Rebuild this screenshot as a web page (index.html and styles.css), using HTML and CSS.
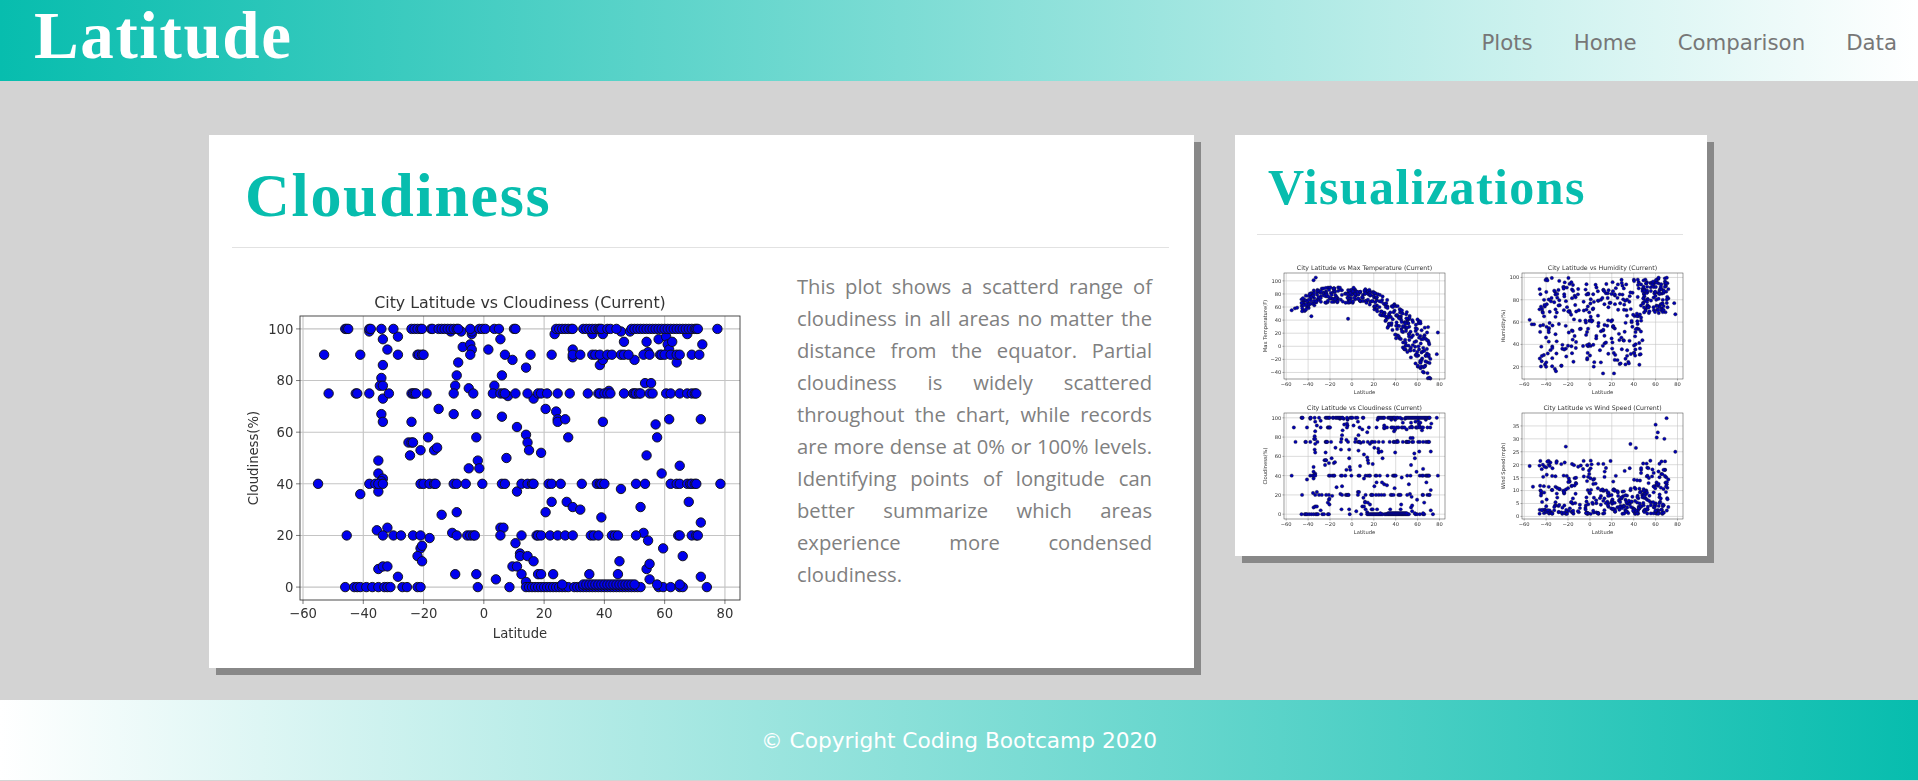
FILE: index.html
```html
<!DOCTYPE html>
<html lang="en">

<head>
    <meta charset="UTF-8">
    <title>Latitude - Cloudiness</title>
    <link rel="stylesheet" href="styles.css">
</head>

<body>
    <header class="topbar">
        <h1 class="brand">Latitude</h1>
        <nav class="topnav">
            <a href="#">Plots</a>
            <a href="#">Home</a>
            <a href="#">Comparison</a>
            <a href="#">Data</a>
        </nav>
    </header>
    <main class="content">
        <section class="card card-main">
            <h2 class="card-title">Cloudiness</h2>
            <hr class="rule">
            <div class="detail">
                <svg class="plot plot-main" id="plot-main" width="510" height="360"></svg>
                <p class="lead">This plot shows a scatterd range of cloudiness in all areas no matter the distance from the equator. Partial cloudiness is widely scattered throughout the chart, while records are more dense at 0% or 100% levels. Identifying points of longitude can better summarize which areas experience more condensed cloudiness.</p>
            </div>
        </section>
        <aside class="card card-side">
            <h2 class="side-title">Visualizations</h2>
            <hr class="rule">
            <div class="thumbs">
                <svg class="plot plot-small" id="plot-temp" width="195" height="134"></svg>
                <svg class="plot plot-small" id="plot-humidity" width="195" height="134"></svg>
                <svg class="plot plot-small" id="plot-cloud" width="195" height="134"></svg>
                <svg class="plot plot-small" id="plot-wind" width="195" height="134"></svg>
            </div>
        </aside>
    </main>
    <footer class="bottombar">© Copyright Coding Bootcamp 2020</footer>
    <script src="chart.js"></script>
</body>

</html>
```

FILE: styles.css
```css
* {
    box-sizing: border-box;
    padding: 0;
    margin: 0;
}

body {
    background: #d3d3d3;
    font-family: "DejaVu Sans", Verdana, sans-serif;
}

a {
    text-decoration: none;
}

.topbar {
    height: 81px;
    display: flex;
    justify-content: space-between;
    align-items: flex-start;
    padding: 0 21px 0 34px;
    background: linear-gradient(to right, #07bdae, #fff);
}

.brand {
    font-family: "Liberation Serif", Georgia, serif;
    font-size: 67px;
    letter-spacing: 1.6px;
    line-height: 70px;
    color: #fff;
}

.topnav {
    display: flex;
    gap: 41px;
    padding-top: 30px;
}

.topnav a {
    color: #777;
    font-size: 21.3px;
    line-height: 26px;
}

.content {
    height: 619px;
    display: flex;
    align-items: flex-start;
    gap: 41px;
    padding: 54px 0 0 209px;
}

.card {
    background: #fff;
    box-shadow: 7px 7px 0 #888;
}

.card-main {
    width: 985px;
    height: 533px;
}

.card-side {
    width: 472px;
    height: 421px;
}

.card-title,
.side-title {
    font-family: "Liberation Serif", Georgia, serif;
    color: #07bdae;
}

.card-title {
    font-size: 62px;
    letter-spacing: 1.7px;
    line-height: 75px;
    padding: 23px 0 14px 36px;
}

.side-title {
    font-size: 50px;
    letter-spacing: 1.4px;
    line-height: 62px;
    padding: 21px 0 16px 33px;
}

.rule {
    border: 0;
    border-top: 1px solid #e2e2e2;
}

.card-main .rule {
    margin: 0 25px 0 23px;
}

.card-side .rule {
    margin: 0 24px 0 22px;
}

.detail {
    display: flex;
    justify-content: space-between;
    padding: 22px 42px 0 26px;
}

.plot-main {
    margin-top: 18px;
}

.plot {
    display: block;
    filter: blur(0.5px);
}

.plot-small {
    filter: blur(0.6px);
}

.plot text {
    font-family: "DejaVu Sans", sans-serif;
    fill: #333;
}

.lead {
    width: 355px;
    font-family: "Open Sans", sans-serif;
    font-size: 20.2px;
    font-weight: 400;
    line-height: 32px;
    color: #808080;
    text-align: justify;
}

.thumbs {
    display: grid;
    grid-template-columns: 195px 195px;
    gap: 6px 43px;
    padding: 27px 0 0 25px;
}

.bottombar {
    height: 80px;
    display: flex;
    align-items: center;
    justify-content: center;
    font-size: 21.7px;
    color: #fff;
    background: linear-gradient(to left, #07bdae, #fff);
}
```

FILE: chart.js
```js
const NS = "http://www.w3.org/2000/svg";

// cloudiness readings, grouped by the value the stations report most
const rows = {
    100: [-46, -45.5, -45, -38, -37.5, -34, -30, -24, -23, -22, -21, -20.5, -17.5, -17, -15, -14, -13, -12, -11, -10, -9, -8.5, -4.5, -1.5, -0.5, 0.5, 3.5, 5, 10, 10.5, 24, 25, 26, 27, 28, 29, 29.5, 33, 34, 35, 36, 37, 38, 38.5, 39, 41, 42, 44, 49, 50, 51, 52, 53, 54, 55, 56, 57, 58, 59, 60, 61, 62, 63, 64, 65, 66, 67, 68, 69, 70, 70.5, 71, 77.5],
    99: [-38, -11, -7.5, -4, 45.5, 48.5],
    90: [-53, -41, -28.5, -22, -21.5, -20.5, -20, -4.5, 7, 15.5, 22.5, 29.5, 32, 36, 37, 38.5, 41, 42.5, 45.5, 46.5, 48, 53, 55, 58.5, 59, 60, 62, 64, 65, 69, 71.5],
    75: [-51.5, -42.5, -42, -38, -31.5, -24, -23.5, -23, -22.5, -19, -10, -3.5, 3, 5.5, 6.5, 7, 10.5, 14.5, 18, 19, 21, 24.5, 28.5, 34.5, 38, 38.5, 40, 41, 42, 46.5, 49.5, 50, 50.5, 51.5, 52, 55, 56, 60.5, 62, 65, 67.5, 69, 70, 70.5],
    40: [-55, -38, -36, -35, -33.5, -21, -20, -18, -16.5, -16, -10, -9, -6, -0.5, 6, 7, 12.5, 14.5, 16, 16.5, 21.5, 22.5, 25.5, 32.5, 37.5, 38.5, 39, 40, 50.5, 53.5, 62, 64, 65, 67.5, 68.5, 69, 70, 70.5, 78.5],
    20: [-45.5, -33.5, -30, -27.5, -23.5, -21, -9, -5.5, -4.5, -3.5, -3, 5.5, 12.5, 17.5, 18, 19, 22, 24.5, 27, 29.5, 35.5, 36.5, 38, 42.5, 43.5, 44.5, 50.5, 64.5, 65, 69, 70.5, 71],
    1: [26, 33, 34, 35, 36, 37, 38, 39, 40, 41, 42, 43, 44, 45, 46, 47, 48, 49, 50, 57.5, 65],
    0: [-46, -43, -42, -41, -39, -37, -35, -33, -32, -31, -27, -25.5, -22, -21, -2, 8.5, 14, 15, 16, 17, 18, 19, 20, 21, 22, 23, 24, 25, 26, 27, 28, 30, 31, 32, 33, 34, 35, 36, 37, 38, 39, 40, 41, 42, 43, 44, 45, 46, 47, 48, 49, 50, 51, 52, 58, 59.5, 62, 65, 66, 74]
};

const strays = [[-33.5, 96], [-32, 92], [-28.5, 97], [-33.5, 86], [-34, 81], [-34.5, 78], [-33.5, 78], [-33.5, 73], [-34, 67], [-33.5, 64], [-24, 64], [-25, 56], [-24, 56], [-23.5, 56], [-24.5, 51], [-21, 53], [-18.5, 58], [-16.5, 53], [-15.5, 54], [-15, 69], [-10, 67], [-9.5, 78], [-9, 82], [-8.5, 87], [-7, 93], [-4.5, 94], [-4, 92], [-5, 77], [-4, 98], [-2.5, 67], [-2.5, 58], [-2, 49], [-1.5, 46], [-5, 46], [1.5, 92], [5.5, 96], [6, 82], [3.5, 78], [6, 66], [8, 74], [9.5, 88], [14, 85], [11, 62], [14, 59], [14.5, 56], [15, 53], [7.5, 50], [16.5, 73], [19, 52], [20.5, 69], [24, 68], [24.5, 65], [24.5, 64], [27, 65], [28, 58], [29.5, 92], [29.5, 89], [23.5, 98], [38.5, 86], [39.5, 88], [39.5, 64], [41.5, 76], [39.5, 98], [36, 98], [46.5, 95], [50, 88], [53.5, 79], [55.5, 79], [54, 95], [54.5, 91], [58, 96], [60.5, 97], [61, 94], [61.5, 92], [62.5, 95], [64, 87], [67.5, 98], [72.5, 94], [61.5, 65], [72, 65], [57, 63], [57.5, 58], [54, 51], [59, 44], [65, 47], [-35, 49], [-35, 44], [-33.5, 42], [-34, 41], [-35, 37], [-41, 36], [11, 37], [45.5, 38], [22.5, 33], [27.5, 33], [29.5, 31], [32, 30], [20.5, 29], [39, 27], [52, 31], [68, 33], [72, 25], [-9, 29], [-14, 28], [-35.5, 22], [-32, 23], [-10.5, 21], [5.5, 23], [6.5, 23], [53, 21], [-18, 19], [54.5, 18], [10.5, 17], [-21, 15], [-20.5, 16], [-22, 12], [-20.5, 10], [12, 13], [12, 12], [14.5, 12], [16.5, 10], [59.5, 15], [66, 12], [45, 10], [-35, 7], [-33.5, 8], [-32, 8], [-28.5, 4], [-9.5, 5], [-2.5, 5], [4, 3], [9.5, 8], [11, 8], [12.5, 5], [14, 2], [18, 5], [19, 5], [23, 5], [35, 5], [44.5, 5], [54, 7], [55, 9], [55, 3], [72, 4]];

let cloud = [...strays];
Object.keys(rows).forEach(y => rows[y].forEach(x => cloud.push([x, +y])));

// small repeatable random, the other three plots only need the same look
let seed = 7;
function rnd() {
    seed = (seed * 16807) % 2147483647;
    return seed / 2147483647;
}

function lat() {
    const r = rnd();
    if (r < 0.25) return -46 + rnd() * 36;
    if (r < 0.4) return -10 + rnd() * 20;
    return 10 + rnd() * 62;
}

function tempAt(x) {
    if (x < -30) return 60 + (x + 50) * 0.9;
    if (x < 15) return 78;
    return 78 - (x - 15) * 1.6;
}

function tempSpread(x) {
    return x < 15 ? 24 : 24 + (x - 15) * 1.1;
}

function windAt(x) {
    if (x > 10 && x < 55 && rnd() < 0.7) return 1 + rnd() * 10;
    return 1 + Math.pow(rnd(), 1.8) * 21;
}

const temp = [[77.5, -12], [78.5, 21], [-3.5, 42], [-37, 46], [-33, 105], [-35, 101], [69, -41], [-55, 55], [-52, 58], [-50, 59]];
const humidity = [[-55, 62], [-53, 58], [-51, 58], [77, 77], [78, 67], [-41, 22], [-40, 20], [-32, 18], [-31, 16], [12, 14], [22, 14]];
const wind = [[70, 38], [60, 35.5], [62, 32.5], [61, 30.5], [68, 30], [78, 25], [-22, 27], [37, 28], [42, 26.5], [-55, 19.5], [-52, 11.5]];

for (let i = 0; i < 400; i++) {
    const x = lat();
    temp.push([x, tempAt(x) + (rnd() - 0.5) * tempSpread(x)]);
    const high = x > 48 ? 68 + rnd() * 32 : 20 + rnd() * 80;
    humidity.push([x, high]);
    wind.push([x, windAt(x)]);
}

function el(svg, tag, attrs, text) {
    const node = document.createElementNS(NS, tag);
    Object.keys(attrs).forEach(k => node.setAttribute(k, attrs[k]));
    if (text !== undefined) node.textContent = text;
    svg.appendChild(node);
}

function drawPlot(id, o) {
    const svg = document.getElementById(id);
    const sx = v => o.left + (v - o.xMin) / (o.xMax - o.xMin) * o.w;
    const sy = v => o.top + o.h - (v - o.yMin) / (o.yMax - o.yMin) * o.h;
    const bottom = o.top + o.h;

    o.xTicks.forEach(t => {
        el(svg, "line", { x1: sx(t), x2: sx(t), y1: o.top, y2: bottom, stroke: "#c4c4c4", "stroke-width": o.line });
        el(svg, "line", { x1: sx(t), x2: sx(t), y1: bottom, y2: bottom + o.font * 0.3, stroke: "#333", "stroke-width": o.line * 0.6 });
        el(svg, "text", { x: sx(t), y: bottom + o.font * 1.35, "font-size": o.font, "text-anchor": "middle" }, String(t).replace("-", "\u2212"));
    });
    o.yTicks.forEach(t => {
        el(svg, "line", { x1: o.left, x2: o.left + o.w, y1: sy(t), y2: sy(t), stroke: "#c4c4c4", "stroke-width": o.line });
        el(svg, "line", { x1: o.left - o.font * 0.3, x2: o.left, y1: sy(t), y2: sy(t), stroke: "#333", "stroke-width": o.line * 0.6 });
        el(svg, "text", { x: o.left - o.font * 0.5, y: sy(t) + o.font * 0.36, "font-size": o.font, "text-anchor": "end" }, String(t).replace("-", "\u2212"));
    });

    o.pts.forEach(p => {
        el(svg, "circle", { cx: sx(p[0]), cy: sy(p[1]), r: o.r, fill: o.fill, stroke: "#111", "stroke-width": o.r * 0.2 });
    });

    el(svg, "rect", { x: o.left, y: o.top, width: o.w, height: o.h, fill: "none", stroke: "#333", "stroke-width": o.line * 0.8 });

    const mid = o.left + o.w / 2;
    el(svg, "text", { x: mid, y: o.top - o.font * 0.62, "font-size": o.font * 1.2, "text-anchor": "middle" }, o.title);
    el(svg, "text", { x: mid, y: bottom + o.font * 2.9, "font-size": o.font, "text-anchor": "middle" }, "Latitude");
    const lx = o.left - o.font * 3.2;
    el(svg, "text", { x: lx, y: o.top + o.h / 2, "font-size": o.font, "text-anchor": "middle", transform: `rotate(-90 ${lx} ${o.top + o.h / 2})` }, o.yLabel);
}

const xTicks = [-60, -40, -20, 0, 20, 40, 60, 80];
const small = { left: 24, top: 11, w: 161, h: 106, xMin: -62, xMax: 85, xTicks, font: 5.2, line: 0.6, r: 1.7, fill: "#0000b4" };

drawPlot("plot-main", { left: 65, top: 28, w: 440, h: 284, xMin: -61, xMax: 85, yMin: -5, yMax: 105, xTicks, yTicks: [0, 20, 40, 60, 80, 100], font: 13.2, line: 1.1, r: 4.7, fill: "#0000ee", pts: cloud, title: "City Latitude vs Cloudiness (Current)", yLabel: "Cloudiness(%)" });
drawPlot("plot-temp", { ...small, yMin: -50, yMax: 112, yTicks: [-40, -20, 0, 20, 40, 60, 80, 100], pts: temp, title: "City Latitude vs Max Temperature (Current)", yLabel: "Max Temperature(F)" });
drawPlot("plot-humidity", { ...small, yMin: 9, yMax: 104, yTicks: [20, 40, 60, 80, 100], pts: humidity, title: "City Latitude vs Humidity (Current)", yLabel: "Humidity(%)" });
drawPlot("plot-cloud", { ...small, yMin: -5, yMax: 105, yTicks: [0, 20, 40, 60, 80, 100], pts: cloud, title: "City Latitude vs Cloudiness (Current)", yLabel: "Cloudiness(%)" });
drawPlot("plot-wind", { ...small, yMin: -1, yMax: 40, yTicks: [0, 5, 10, 15, 20, 25, 30, 35], pts: wind, title: "City Latitude vs Wind Speed (Current)", yLabel: "Wind Speed(mph)" });
```
